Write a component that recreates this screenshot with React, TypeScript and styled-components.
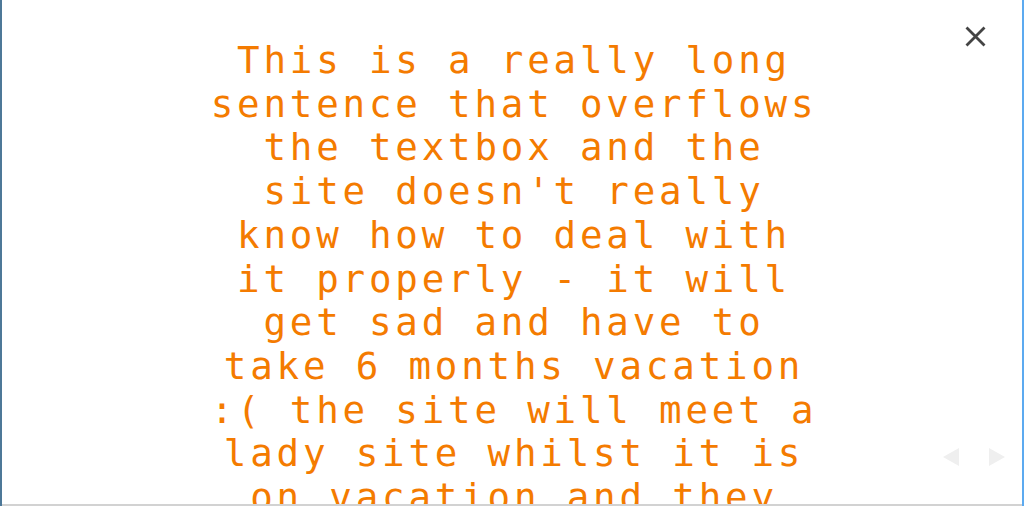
import React from "react";
import styled, { createGlobalStyle } from "styled-components";

const Global = createGlobalStyle`
  html, body { margin: 0; padding: 0; background: #ffffff; }
  body { font-family: "DejaVu Sans Mono", monospace; }
`;

const Frame = styled.div`
  position: relative;
  box-sizing: border-box;
  width: 1024px;
  height: 506px;
  border-left: 2px solid #4d7898;
  border-right: 2px solid #5caaf0;
  overflow: hidden;
  background: #ffffff;
`;

const Stage = styled.div`
  box-sizing: border-box;
  height: 506px;
  border-bottom: 2px solid #d2d2d2;
  overflow: hidden;
  padding-top: 39px;
`;

const Caption = styled.p`
  margin: 0 auto;
  width: 622px;
  text-align: center;
  font-family: "DejaVu Sans Mono", monospace;
  font-size: 37.5px;
  line-height: 43.7px;
  letter-spacing: 3.8px;
  color: #f47b00;
  padding-left: 4px;
`;

const CloseButton = styled.button`
  position: absolute;
  top: 24px;
  left: 961px;
  width: 24px;
  height: 24px;
  padding: 0;
  border: none;
  background: transparent;
  display: flex;
  align-items: center;
  justify-content: center;
  cursor: pointer;
`;

const Arrows = styled.div`
  position: absolute;
  top: 448px;
  left: 941px;
  display: flex;
  gap: 30px;
`;

const Arrow = styled.button<{ $dir: "left" | "right" }>`
  width: 0;
  height: 0;
  padding: 0;
  background: transparent;
  border-top: 9px solid transparent;
  border-bottom: 9px solid transparent;
  ${(p) =>
    p.$dir === "left"
      ? "border-right: 16px solid #efefef; border-left: none;"
      : "border-left: 16px solid #efefef; border-right: none;"}
  cursor: pointer;
`;

export default function App() {
  return (
    <>
      <Global />
      <Frame>
        <Stage>
          <Caption>
            This is a really long sentence that overflows the textbox and the
            site doesn't really know how to deal with it properly - it will
            get sad and have to take 6 months vacation :( the site will meet a
            lady site whilst it is on vacation and they will fall in love and
            live happily ever after
          </Caption>
        </Stage>
        <CloseButton aria-label="Close">
          <svg width="21" height="21" viewBox="0 0 21 21">
            <path
              d="M1.5 1.5 L19.5 19.5 M19.5 1.5 L1.5 19.5"
              stroke="#444444"
              strokeWidth="2.8"
              fill="none"
            />
          </svg>
        </CloseButton>
        <Arrows>
          <Arrow $dir="left" aria-label="Previous" />
          <Arrow $dir="right" aria-label="Next" />
        </Arrows>
      </Frame>
    </>
  );
}
